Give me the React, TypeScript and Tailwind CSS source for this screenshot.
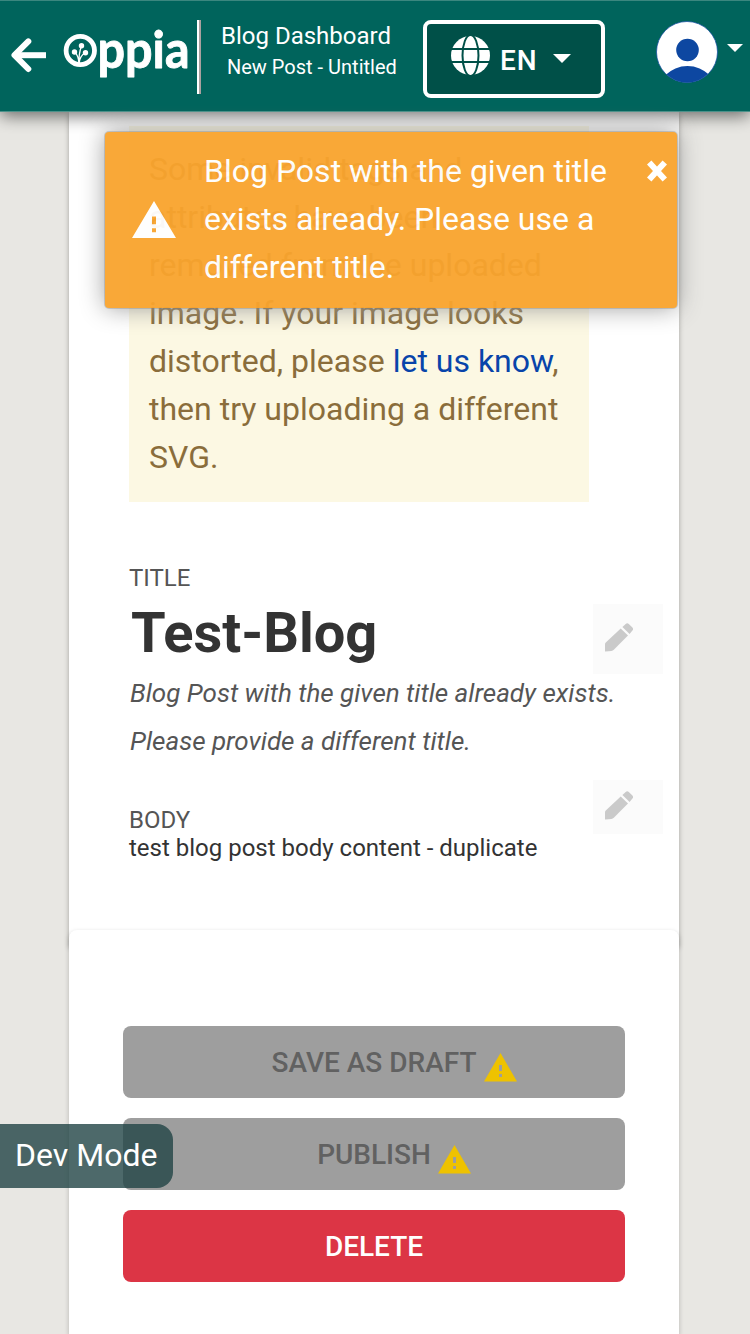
function Warning({ className }: { className: string }) {
  return (
    <svg viewBox="1 2 22 19" preserveAspectRatio="none" className={className} fill="currentColor">
      <path d="M1 21h22L12 2 1 21zm12-3h-2v-2h2v2zm0-4h-2v-4h2v4z" />
    </svg>
  );
}

function Pencil() {
  return (
    <svg viewBox="0 0 28 29" className="h-[29px] w-7 fill-[#cacaca]">
      <path d="M0 28.2V21.2Q0 20.2.8 19.4L15.7 5.4L23 12.5L8.8 26.7Q7.8 27.7 6.4 27.9L.6 28.5Q0 28.5 0 28.2Z" />
      <path d="M17.4 4L20.7.9Q22.2-.5 23.8.9L27.4 4.6Q28.8 6.2 27.4 7.6L24.6 10.9Z" />
    </svg>
  );
}

function Logo() {
  return (
    <svg viewBox="62 28 128 56" className="h-14 w-32 shrink-0 overflow-visible" fill="#fff">
      <circle cx="80.3" cy="50.5" r="14.2" fill="none" stroke="#fff" strokeWidth="4.8" />
      <circle cx="74.5" cy="52" r="2.7" />
      <circle cx="81.5" cy="45.8" r="2.7" />
      <circle cx="85.5" cy="52.8" r="2.7" />
      <path d="M74.5 52Q78.5 55 79 64M81.5 45.7Q78.5 54 79 64M85.3 52.8Q79.5 56 79 64" fill="none" stroke="#fff" strokeWidth="1.3" />
      <text x="97.5" y="68" textLength="92" lengthAdjust="spacingAndGlyphs" fontSize="51" fontWeight="700" fontFamily="Lato, sans-serif" stroke="#fff" strokeWidth="0.9" strokeLinejoin="round">ppia</text>
    </svg>
  );
}

function Header() {
  return (
    <header className="relative z-10 flex h-28 shrink-0 items-start border-b border-[#4c918a] bg-[#00645c] shadow-[inset_0_1px_0_#3b877f,0_4px_16px_rgba(0,0,0,0.55)]">
      <svg viewBox="0 0 36 36" className="ml-2.5 mt-[37px] size-9 shrink-0" fill="none" stroke="#fff" strokeWidth="6">
        <path d="M36 18.2H5" />
        <path d="M18.3 4.4L4.5 18.2L18.3 32" strokeLinecap="round" strokeLinejoin="round" />
      </svg>
      <div className="ml-4 mt-7">
        <Logo />
      </div>
      <div className="ml-[7px] mt-5 h-[74px] w-1 shrink-0 border-l-2 border-r-2 border-l-white border-r-[#aaa09f]" />
      <div className="ml-5 mt-5 w-[202px] shrink-0 whitespace-nowrap text-white">
        <div className="text-[24px] leading-8">Blog Dashboard</div>
        <div className="pl-1.5 text-[20px] leading-[30px]">New Post - Untitled</div>
      </div>
      <div className="mt-5 flex h-[78px] w-[182px] shrink-0 items-start rounded-lg border-4 border-white bg-[#005048] text-white">
        <svg viewBox="0 0 39 39" className="ml-6 mt-3 size-[39px]">
          <circle cx="19.5" cy="19.5" r="19.5" fill="#fff" />
          <g fill="none" stroke="#005048" strokeWidth="2">
            <ellipse cx="19.5" cy="19.5" rx="8" ry="20.5" />
            <path d="M0 13H39M0 26H39" />
          </g>
        </svg>
        <span className="ml-2.5 mt-[17px] text-[28px] font-medium leading-10 tracking-[1px]">EN</span>
        <svg viewBox="0 0 18 9" className="ml-[15px] mt-[30px] h-[9px] w-[18px]" fill="#fff"><path d="M0 0H18L9 9Z" /></svg>
      </div>
      <svg viewBox="0 0 62 62" className="ml-[51px] mt-[21px] size-[62px] shrink-0">
        <defs>
          <clipPath id="avatar"><circle cx="31" cy="31" r="30.5" /></clipPath>
        </defs>
        <circle cx="31" cy="31" r="30.5" fill="#fff" />
        <g clipPath="url(#avatar)" fill="#0d47a1">
          <circle cx="31.5" cy="29" r="11.3" />
          <circle cx="31.5" cy="76.5" r="31.5" />
        </g>
        <circle cx="31" cy="31" r="30.5" fill="none" stroke="#0d47a1" strokeWidth="0.7" />
      </svg>
      <svg viewBox="0 0 16 8" className="ml-[9px] mt-11 h-2 w-4 shrink-0" fill="#fff"><path d="M0 0H16L8 8Z" /></svg>
    </header>
  );
}

function Toast() {
  return (
    <div className="absolute left-[105px] top-[132px] z-20 flex h-44 w-[572px] rounded-[4px] bg-[#f9a42e] text-white opacity-95 shadow-[0_0_0_1px_rgba(130,130,130,0.35),0_0_24px_#999]">
      <Warning className="ml-[27px] mt-[69px] h-[37px] w-11" />
      <div className="ml-7 mt-[15px] whitespace-nowrap text-[32px] leading-[48px]">
        Blog Post with the given title
        <br />
        exists already. Please use a
        <br />
        different title.
      </div>
      <svg viewBox="0 0 20 22" className="absolute right-2.5 top-7 h-[22px] w-5" fill="none" stroke="#fff" strokeWidth="6">
        <path d="M2.2 2.5L17.8 19.5M17.8 2.5L2.2 19.5" />
      </svg>
    </div>
  );
}

const buttonBase = "flex h-[72px] items-start justify-center rounded-lg pt-[17px] text-[28px] font-medium leading-10";

export default function App() {
  return (
    <div className="relative flex h-[1334px] w-[750px] flex-col overflow-hidden bg-[#e8e7e3] font-[Roboto,sans-serif]">
      <Header />
      <main className="ml-[69px] flex w-[610px] flex-1 flex-col">
        <section className="-mb-4 h-[834px] shrink-0 bg-white pl-[60px] pt-3.5 shadow-[0_2px_5px_rgba(0,0,0,0.3)]">
          <div className="h-[376px] w-[460px] whitespace-nowrap bg-[#fcf8e3] px-5 pt-[19px] text-[32px] leading-[48px] text-[#8a6d3b]">
            Some invalid tags and
            <br />
            attributes have been
            <br />
            removed from the uploaded
            <br />
            image. If your image looks
            <br />
            distorted, please <a className="text-[#0844aa]">let us know</a>,
            <br />
            then try uploading a different
            <br />
            SVG.
          </div>
          <div className="mt-[60px] h-[42px] text-[24px] leading-8 text-[#555]">TITLE</div>
          <div className="flex h-[70px] justify-between pr-4">
            <h1 className="pl-0.5 text-[56px] font-bold leading-[58px] text-[#333]">Test-Blog</h1>
            <div className="h-[70px] w-[70px] bg-[#fbfbfb] pl-3 pt-[19px]"><Pencil /></div>
          </div>
          <p className="-mt-[5px] h-[107px] whitespace-nowrap pl-px text-[26px] italic leading-[48px] text-[#555]">
            Blog Post with the given title already exists.
            <br />
            Please provide a different title.
          </p>
          <div className="mt-1 flex justify-between pr-4">
            <div className="whitespace-nowrap pt-[26px] text-[24px] leading-7 text-[#333]">
              <div className="text-[#555]">BODY</div>
              <div>test blog post body content - duplicate</div>
            </div>
            <div className="h-[54px] w-[70px] bg-[#fbfbfb] pl-3 pt-[11px]"><Pencil /></div>
          </div>
        </section>
        <section className="relative flex flex-1 flex-col gap-5 rounded-t-lg bg-white px-[54px] pt-24 shadow-[0_2px_5px_rgba(0,0,0,0.22)]">
          <div className={`${buttonBase} bg-[#9e9e9e] text-[#616161]`}>
            SAVE AS DRAFT
            <Warning className="-mr-[41px] ml-2 mt-2.5 h-[28.5px] w-[33px] text-[#eec200]" />
          </div>
          <div className={`${buttonBase} bg-[#9e9e9e] text-[#616161]`}>
            PUBLISH
            <Warning className="-mr-10 ml-[7px] mt-2.5 h-[28.5px] w-[33px] text-[#eec200]" />
          </div>
          <div className={`${buttonBase} bg-[#dc3545] text-white`}>DELETE</div>
        </section>
      </main>
      <Toast />
      <div className="absolute left-0 top-[1124px] z-20 h-16 w-[173px] rounded-r-2xl bg-[#204345]/80 pl-[15px] text-[32px] leading-[62px] text-white">Dev Mode</div>
    </div>
  );
}
